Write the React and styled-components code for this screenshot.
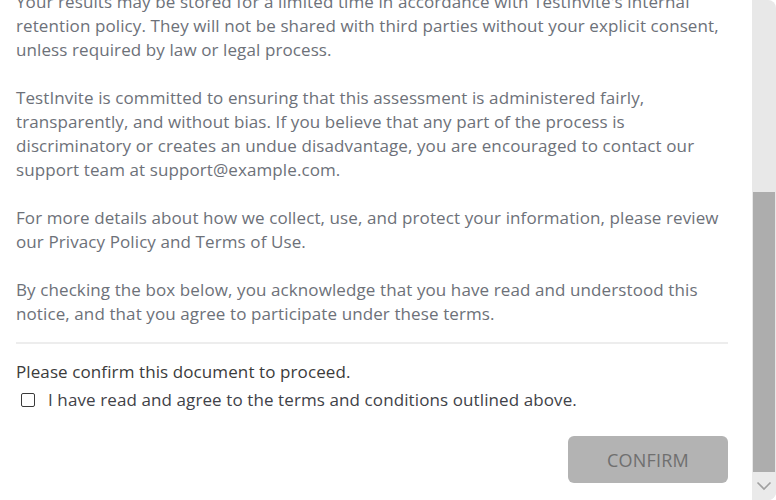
import React, { useState } from 'react';
import styled, { createGlobalStyle } from 'styled-components';

const GlobalStyle = createGlobalStyle`
  html, body {
    margin: 0;
    padding: 0;
    background: #ffffff;
  }
  body {
    font-family: "Open Sans", "Liberation Sans", sans-serif;
  }
`;

const Modal = styled.div`
  display: flex;
  width: 776px;
  height: 500px;
  background: #ffffff;
  overflow: hidden;
  border-radius: 8px;
`;

const Body = styled.div`
  flex: 1;
  display: flex;
  flex-direction: column;
  justify-content: flex-end;
  overflow: hidden;
  padding: 0 24px 17px 16px;
`;

const Paragraph = styled.p`
  margin: 0 0 ${({ last }) => (last ? '0' : '24px')};
  font-size: 17px;
  letter-spacing: 0.1px;
  line-height: 24px;
  color: #6d7179;
`;

const Divider = styled.div`
  height: 0;
  border-top: 2px solid #ededed;
  margin: 16px 0 16px;
`;

const Prompt = styled.div`
  font-size: 17px;
  letter-spacing: 0.1px;
  line-height: 24px;
  color: #3b3b3b;
`;

const CheckRow = styled.label`
  display: flex;
  align-items: center;
  gap: 13px;
  margin-top: 4px;
  padding-left: 5px;
  font-size: 17px;
  letter-spacing: 0.1px;
  line-height: 24px;
  color: #3f4248;
  cursor: pointer;
`;

const Box = styled.span`
  width: 14px;
  height: 14px;
  flex-shrink: 0;
  box-sizing: border-box;
  border: 1.5px solid #3a3a3a;
  border-radius: 2px;
  background: ${({ checked }) => (checked ? '#3a3a3a' : '#fff')};
`;

const Footer = styled.div`
  display: flex;
  justify-content: flex-end;
  margin-top: 24px;
`;

const ConfirmButton = styled.button`
  width: 160px;
  height: 47px;
  border: none;
  border-radius: 6px;
  background: #b3b3b3;
  color: #6f6f6f;
  font-family: inherit;
  font-size: 18px;
  letter-spacing: 0.2px;
  cursor: not-allowed;
`;

const Scrollbar = styled.div`
  width: 24px;
  display: flex;
  flex-direction: column;
  background: #e8e8e8;
`;

const TrackSpace = styled.div`
  height: 192px;
`;

const Thumb = styled.div`
  flex: 1;
  margin: 0 1px;
  background: #adadad;
`;

const ArrowButton = styled.div`
  height: 28px;
  display: flex;
  align-items: center;
  justify-content: center;
  background: #eaeaea;
`;

const App = () => {
  const [checked, setChecked] = useState(false);

  return (
    <>
      <GlobalStyle />
      <Modal>
        <Body>
          <Paragraph>
            Your results may be stored for a limited time in accordance with TestInvite's internal
            retention policy. They will not be shared with third parties without your explicit consent,
            unless required by law or legal process.
          </Paragraph>
          <Paragraph>
            TestInvite is committed to ensuring that this assessment is administered fairly,
            transparently, and without bias. If you believe that any part of the process is
            discriminatory or creates an undue disadvantage, you are encouraged to contact our
            support team at support@example.com.
          </Paragraph>
          <Paragraph>
            For more details about how we collect, use, and protect your information, please review
            our Privacy Policy and Terms of Use.
          </Paragraph>
          <Paragraph last>
            By checking the box below, you acknowledge that you have read and understood this
            notice, and that you agree to participate under these terms.
          </Paragraph>
          <Divider />
          <Prompt>Please confirm this document to proceed.</Prompt>
          <CheckRow onClick={() => setChecked(!checked)}>
            <Box checked={checked} />
            I have read and agree to the terms and conditions outlined above.
          </CheckRow>
          <Footer>
            <ConfirmButton disabled={!checked}>CONFIRM</ConfirmButton>
          </Footer>
        </Body>
        <Scrollbar>
          <TrackSpace />
          <Thumb />
          <ArrowButton>
            <svg width="16" height="10" viewBox="0 0 16 10">
              <path d="M1.5 1.5 L8 8 L14.5 1.5" fill="none" stroke="#a0a0a0" strokeWidth="1.6" />
            </svg>
          </ArrowButton>
        </Scrollbar>
      </Modal>
    </>
  );
};

export default App;
